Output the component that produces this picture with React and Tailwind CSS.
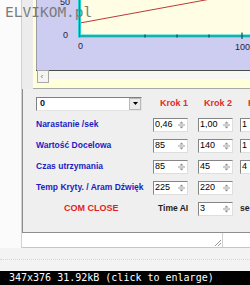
import React from 'react';

const labelFont = { fontFamily: '"Liberation Sans", Arial, sans-serif' };

// tiny up/down arrows of a windows spin box
const SpinArrows = () => (
    <svg width="7" height="10" viewBox="0 0 7 10" className="mr-[2px] shrink-0">
        <polygon points="1.5,3.5 5.5,3.5 3.5,1.5" fill="#8c8c8c" />
        <line x1="0" y1="5" x2="7" y2="5" stroke="#9a9a9a" strokeWidth="1" />
        <polygon points="1.5,6.5 5.5,6.5 3.5,8.5" fill="#8c8c8c" />
    </svg>
);

const Spin = ({ value }) => (
    <div className="flex h-[14px] w-[35px] shrink-0 items-center border border-t-[#858585] border-l-[#858585] border-b-[#dedede] border-r-[#dedede] bg-white">
        <span className="flex-1 pl-[1px] text-[9px] leading-none text-black">{value}</span>
        <SpinArrows />
    </div>
);

const Label = ({ children }) => (
    <div className="w-[117px] shrink-0 whitespace-nowrap text-[8.5px] font-bold leading-none text-[#1c1cc4]">
        {children}
    </div>
);

const rows = [
    { label: 'Narastanie /sek', values: ['0,46', '1,00', '1'] },
    { label: 'Wartość Docelowa', values: ['85', '140', '1'] },
    { label: 'Czas utrzymania', values: ['85', '45', '4'] },
    { label: 'Temp Kryty. / Aram Dźwięk', values: ['225', '220'] },
];

const Chart = () => (
    <svg width="217" height="89" viewBox="0 0 217 89" className="block shrink-0">
        <rect x="0" y="0" width="217" height="89" fill="#ffffda" />
        <rect x="3" y="0" width="214" height="70" fill="#cdcdf2" />
        <line x1="3.5" y1="0" x2="3.5" y2="70" stroke="#9c9ca8" />
        <rect x="46" y="0" width="171" height="35" fill="#fffde4" />
        <line x1="47" y1="23" x2="175" y2="-0.5" stroke="#b83a3a" strokeWidth="1" />
        {/* axes */}
        <line x1="46.5" y1="0" x2="46.5" y2="37.5" stroke="#20d4d4" strokeWidth="3" />
        <line x1="45" y1="36" x2="217" y2="36" stroke="#20d4d4" strokeWidth="3" />
        <line x1="46.5" y1="0" x2="46.5" y2="37" stroke="#0a7a7a" strokeWidth="0.8" />
        <line x1="46" y1="36" x2="217" y2="36" stroke="#0a7a7a" strokeWidth="0.8" />
        {[112, 144, 176].map((x) => (
            <line key={x} x1={x} y1="34.5" x2={x} y2="37.5" stroke="#0a5050" strokeWidth="1.2" />
        ))}
        <line x1="209" y1="32.5" x2="209" y2="39" stroke="#0a5050" strokeWidth="1.2" />
        <g fill="#1e1e3c" fontSize="9" fontFamily='"Liberation Sans", Arial, sans-serif'>
            <text x="27" y="5">50</text>
            <text x="30" y="38">0</text>
            <text x="45" y="49">0</text>
            <text x="202" y="50">100</text>
        </g>
        {/* scroll strip */}
        <line x1="3" y1="70.5" x2="217" y2="70.5" stroke="#4c4c4c" />
        <rect x="16" y="71" width="201" height="8" fill="#f7f7f4" />
        <rect x="4.5" y="70.5" width="11" height="12" fill="#f4f4f2" stroke="#a8a8a8" />
        <text x="7.5" y="79" fontSize="8" fill="#707070" fontFamily='"Liberation Sans", Arial, sans-serif'>‹</text>
        <line x1="0" y1="88.5" x2="217" y2="88.5" stroke="#a8a8a8" />
    </svg>
);

const App = () => {
    return (
        <div className="relative h-[285px] w-[250px] overflow-hidden bg-white" style={labelFont}>
            <div className="flex h-[248px]">
                <div className="w-[22px] shrink-0 border-r border-[#d0d0d0] bg-[#fbfbfb]" />
                <div className="flex w-[228px] flex-col">
                    <div className="flex h-[89px]">
                        <div className="w-[11px] shrink-0 bg-[#ececec]" />
                        <Chart />
                    </div>

                    {/* form panel */}
                    <div className="flex h-[144px] flex-col border-b border-l border-[#8e8e8e] bg-[#efefef] pl-[13px] pt-[4px]">
                        <div className="flex h-[21px] items-center">
                            <div className="w-[117px] shrink-0">
                                <div className="flex h-[14px] w-[106px] items-center border border-t-[#808080] border-l-[#808080] border-b-[#e4e4e4] border-r-[#e4e4e4] bg-white">
                                    <span className="flex-1 pl-[3px] text-[9px] font-bold leading-none text-[#10104a]">0</span>
                                    <div className="flex h-[12px] w-[12px] items-center justify-center border border-[#b8b8b8] bg-[#ececec]">
                                        <svg width="5" height="3" viewBox="0 0 5 3">
                                            <polygon points="0,0 5,0 2.5,3" fill="#000" />
                                        </svg>
                                    </div>
                                </div>
                            </div>
                            <div className="w-[35px] shrink-0 whitespace-nowrap pl-[7px] text-[9px] font-bold leading-none text-[#e02c2c]">Krok 1</div>
                            <div className="ml-[10px] w-[35px] shrink-0 whitespace-nowrap pl-[6px] text-[9px] font-bold leading-none text-[#e02c2c]">Krok 2</div>
                            <div className="ml-[7px] shrink-0 whitespace-nowrap pl-[8px] text-[9px] font-bold leading-none text-[#e02c2c]">Krok 3</div>
                        </div>

                        {rows.map((row) => (
                            <div key={row.label} className="flex h-[21px] items-center">
                                <Label>{row.label}</Label>
                                <Spin value={row.values[0]} />
                                <div className="ml-[10px]">
                                    <Spin value={row.values[1]} />
                                </div>
                                {row.values[2] && (
                                    <div className="ml-[7px]">
                                        <Spin value={row.values[2]} />
                                    </div>
                                )}
                            </div>
                        ))}

                        <div className="flex h-[21px] items-center">
                            <div className="w-[117px] shrink-0 pl-[28px] text-[9px] font-bold leading-none text-[#e01e1e]">COM CLOSE</div>
                            <div className="w-[35px] shrink-0 whitespace-nowrap pl-[5px] text-[8.5px] font-bold leading-none text-[#1e1e1e]">Time AI</div>
                            <div className="ml-[10px]">
                                <Spin value="3" />
                            </div>
                            <div className="ml-[7px] text-[8.5px] font-bold leading-none text-[#1e1e1e]">sec</div>
                        </div>
                    </div>

                    {/* reply box edge */}
                    <div className="flex h-[15px] border-b border-[#c6c6c6] bg-white">
                        <div className="flex w-[201px] shrink-0 items-end justify-end border-r border-[#cfcfcf] pb-[1px] pr-[1px]">
                            <svg width="6" height="6" viewBox="0 0 6 6">
                                <line x1="0" y1="6" x2="6" y2="0" stroke="#9a9a9a" />
                                <line x1="3" y1="6" x2="6" y2="3" stroke="#9a9a9a" />
                            </svg>
                        </div>
                    </div>
                </div>
            </div>

            <div className="flex h-[23px] items-center bg-[#f3f3f3]">
                <div className="w-full border-t border-dotted border-[#d6d6d6]" />
            </div>

            <div
                className="flex h-[14px] items-center bg-black pl-[9px] text-[10px] leading-none text-white"
                style={{ fontFamily: '"DejaVu Sans Mono", monospace' }}
            >
                347x376 31.92kB (click to enlarge)
            </div>

            <div
                className="absolute left-[5px] top-[5px] text-[14.5px] leading-none text-[#7c7c7c]"
                style={{ fontFamily: '"DejaVu Sans Mono", monospace' }}
            >
                ELVIKOM.pl
            </div>
        </div>
    );
};

export default App;
